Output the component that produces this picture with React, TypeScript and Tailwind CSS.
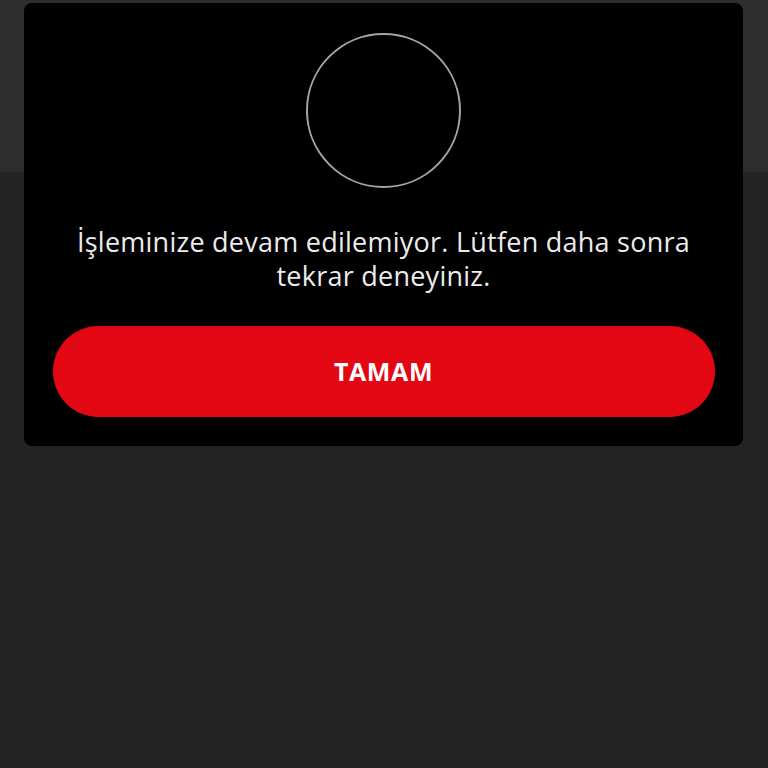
export default function App() {
  return (
    <div className="relative w-[768px] h-[768px] bg-[#232323] overflow-hidden" style={{ fontFamily: '"Open Sans", "Noto Sans", sans-serif' }}>
      <div className="absolute left-0 top-0 w-full h-[172px] bg-[#2d2d2d]" />
      <div className="relative pt-[3px] px-[24px]">
        <div className="w-[719px] h-[443px] bg-black rounded-[8px] flex flex-col items-center">
          <div className="mt-[30px] w-[155px] h-[155px] rounded-full border-2 border-[#a4a4a4]" />
          <p className="mt-[37px] text-[27px] leading-[34px] tracking-[0.25px] text-[#ececec] text-center">
            İşleminize devam edilemiyor. Lütfen daha sonra
            <br />
            tekrar deneyiniz.
          </p>
          <button className="mt-[33px] w-[662px] h-[91px] rounded-full bg-[#e30613] text-white text-[25px] font-bold tracking-[0.6px]">
            TAMAM
          </button>
        </div>
      </div>
    </div>
  );
}
